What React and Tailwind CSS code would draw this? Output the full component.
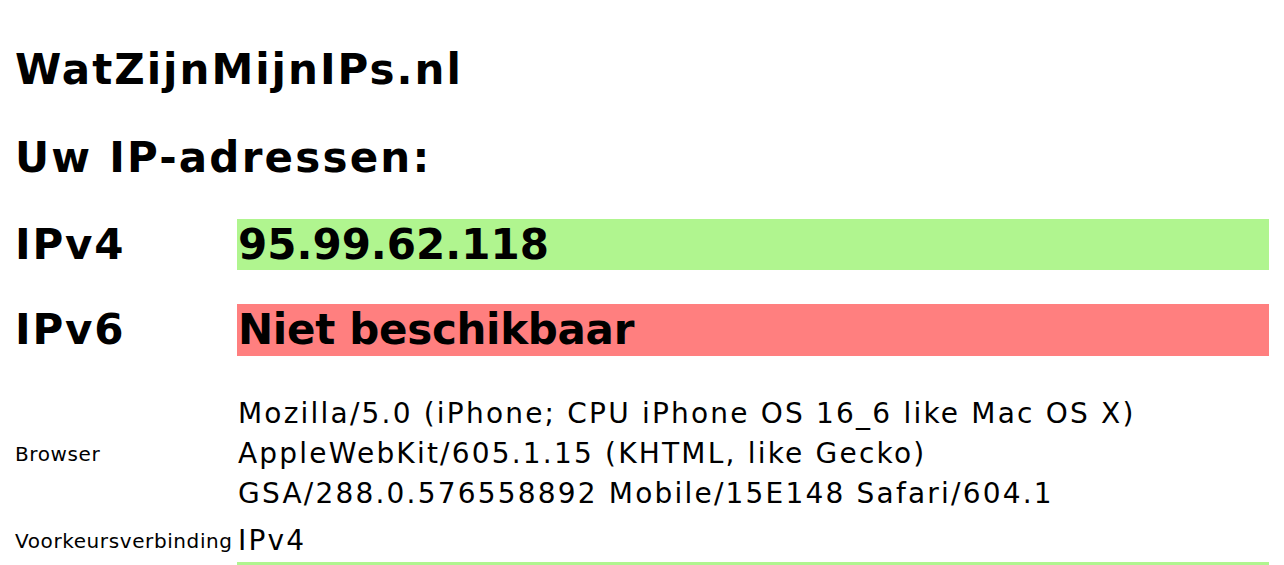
export default function App() {
  return (
    <div className="min-h-screen bg-white text-black px-[15px] pt-[44px] font-['DejaVu_Sans',Verdana,sans-serif]">
      <h1 className="text-[42px] font-bold leading-[52px] tracking-[2px]">WatZijnMijnIPs.nl</h1>
      <h2 className="mt-[36px] text-[42px] font-bold leading-[52px] tracking-[2.2px]">Uw IP-adressen:</h2>
      <div className="mt-[35px] flex flex-col">
        <div className="flex">
          <div className="w-[222px] shrink-0 text-[42px] font-bold leading-[51px] tracking-[1.8px]">IPv4</div>
          <div className="flex-1 bg-[#b0f58f] text-[42px] font-bold leading-[51px] px-[1px]">95.99.62.118</div>
        </div>
        <div className="mt-[34px] flex">
          <div className="w-[222px] shrink-0 text-[42px] font-bold leading-[52px] tracking-[1.8px]">IPv6</div>
          <div className="flex-1 bg-[#ff7f7f] text-[42px] font-bold leading-[52px] px-[1px] tracking-[-0.3px]">Niet beschikbaar</div>
        </div>
        <div className="mt-[38px] flex items-center">
          <div className="w-[222px] shrink-0 text-[20px] tracking-[0.6px]">Browser</div>
          <div className="flex-1 text-[28px] leading-[40px] px-[1px] tracking-[2.2px]">
            Mozilla/5.0 (iPhone; CPU iPhone OS 16_6 like Mac OS X)<br />
            AppleWebKit/605.1.15 (KHTML, like Gecko)<br />
            GSA/288.0.576558892 Mobile/15E148 Safari/604.1
          </div>
        </div>
        <div className="mt-[7px] flex items-center">
          <div className="w-[222px] shrink-0 text-[20px] whitespace-nowrap tracking-[0.6px]">Voorkeursverbinding</div>
          <div className="flex-1 text-[28px] leading-[40px] px-[1px] tracking-[2.2px]">IPv4</div>
        </div>
        <div className="mt-[1px] ml-[222px] h-[40px] bg-[#b0f58f]"></div>
      </div>
    </div>
  );
}
